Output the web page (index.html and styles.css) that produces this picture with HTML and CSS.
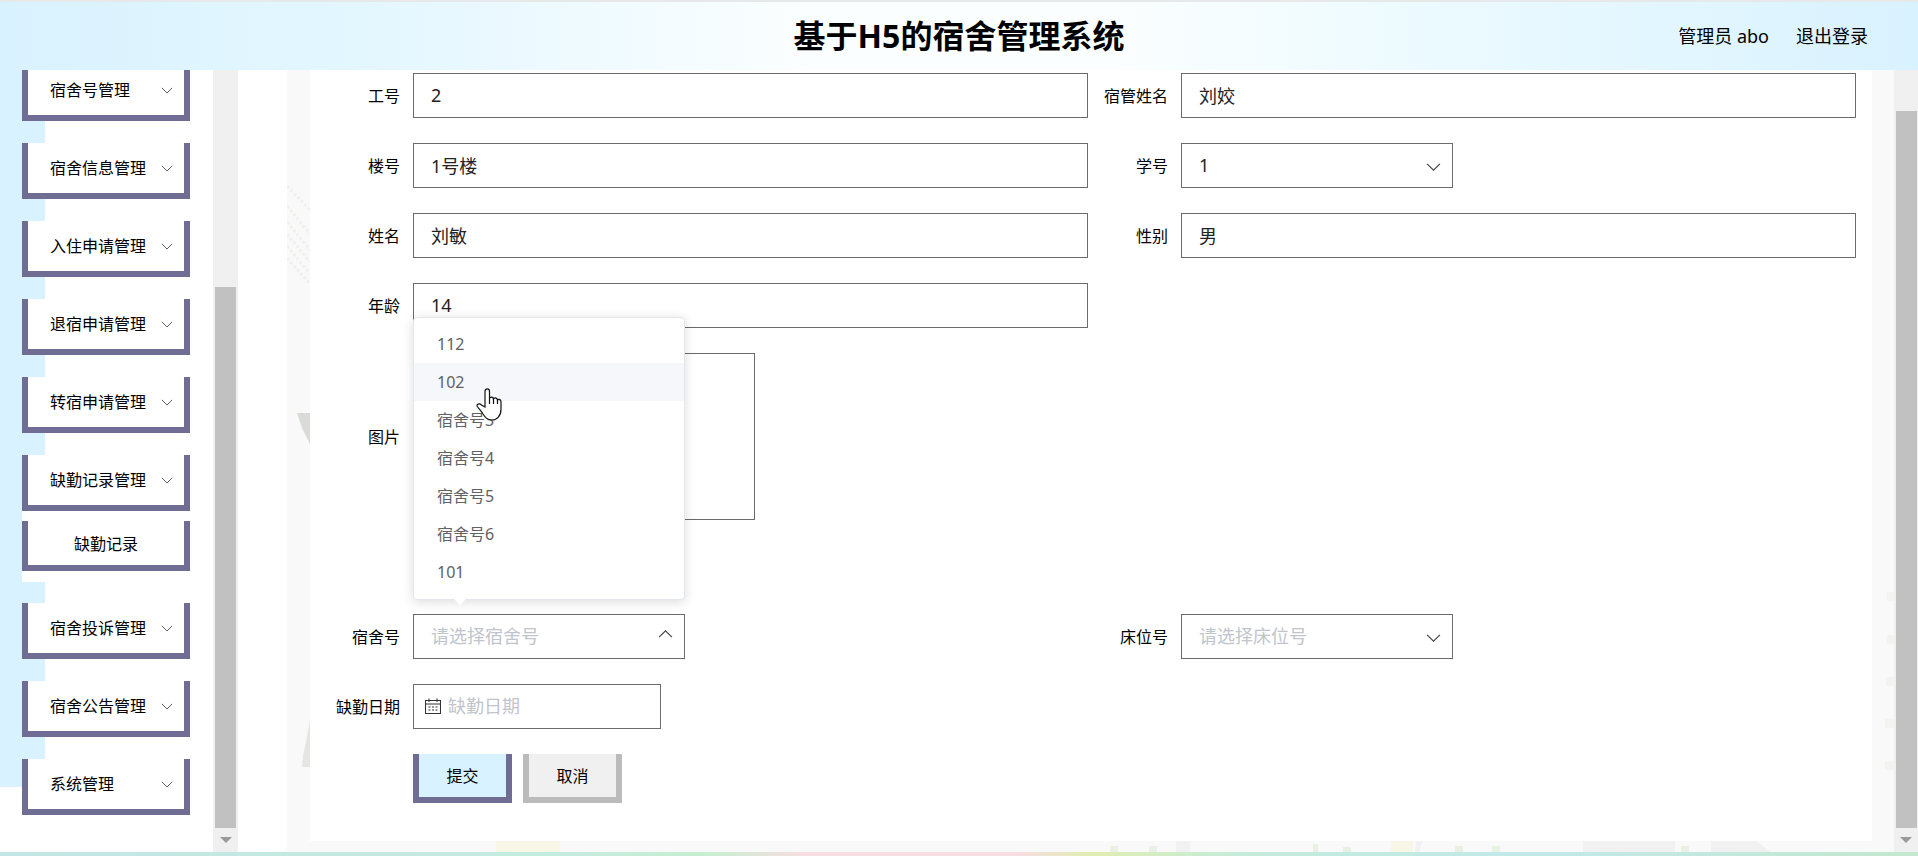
FILE: index.html
```
<!DOCTYPE html>
<html lang="zh-CN">

<head>
    <meta charset="utf-8">
    <title>基于H5的宿舍管理系统</title>
    <link rel="stylesheet" href="styles.css">
</head>

<body>
    <svg class="symbols" aria-hidden="true">
        <symbol id="arrow" viewBox="0 0 14 14">
            <path d="M1 4.5 L7 10.5 L13 4.5" fill="none" stroke="currentColor" stroke-width="1.1" />
        </symbol>
    </svg>

    <header class="header">
        <h1>基于H5的宿舍管理系统</h1>
        <div class="header-user">
            <span>管理员 abo</span>
            <a href="#">退出登录</a>
        </div>
    </header>

    <div class="layout">
        <aside class="sidebar">
            <nav class="menu">
                <a class="menu-item" href="#">宿舍号管理<svg class="menu-arrow"><use href="#arrow" /></svg></a>
                <a class="menu-item" href="#">宿舍信息管理<svg class="menu-arrow"><use href="#arrow" /></svg></a>
                <a class="menu-item" href="#">入住申请管理<svg class="menu-arrow"><use href="#arrow" /></svg></a>
                <a class="menu-item" href="#">退宿申请管理<svg class="menu-arrow"><use href="#arrow" /></svg></a>
                <a class="menu-item" href="#">转宿申请管理<svg class="menu-arrow"><use href="#arrow" /></svg></a>
                <a class="menu-item open" href="#">缺勤记录管理<svg class="menu-arrow"><use href="#arrow" /></svg></a>
                <div class="submenu">
                    <a class="submenu-item" href="#">缺勤记录</a>
                </div>
                <a class="menu-item" href="#">宿舍投诉管理<svg class="menu-arrow"><use href="#arrow" /></svg></a>
                <a class="menu-item" href="#">宿舍公告管理<svg class="menu-arrow"><use href="#arrow" /></svg></a>
                <a class="menu-item" href="#">系统管理<svg class="menu-arrow"><use href="#arrow" /></svg></a>
            </nav>
        </aside>
        <div class="scrollbar scrollbar-menu">
            <div class="scrollbar-thumb"></div>
            <div class="scrollbar-down"></div>
        </div>

        <main class="main">
            <svg class="scene-left" viewBox="0 0 23 782" aria-hidden="true">
                <g stroke="#eff1ee" stroke-width="3" stroke-dasharray="3 2">
                    <path d="M0 116 L23 140 M0 136 L23 164 M0 152 L23 180 M0 164 L23 192 M0 176 L23 204 M0 188 L23 214" />
                </g>
                <path d="M10 343 H23 V374 L19 366 L15 358 Z" fill="#d8dbd7" />
                <path d="M23 650 V697 H15 L16 686 L19 672 Z" fill="#e3e6e2" />
            </svg>
            <svg class="scene-right" viewBox="0 0 22 300" aria-hidden="true">
                <path d="M15 40h7v9h-7z M15 83h7v9h-7z M14 125h8v9h-8z M13 167h9v9h-9z M13 209h9v9h-9z" fill="#f3f3f1" />
            </svg>
            <svg class="scene-bottom" viewBox="0 0 1607 11" preserveAspectRatio="none" aria-hidden="true">
                <path d="M209 0h64v11h-64z M1104 0h22v11h-22z" fill="#f8f6e6" />
                <path d="M889 0h14v11h-14z M1129 0h7l-4 11h-4z M1296 0h92v11h-92z M1424 0h45l15 11h-60z" fill="#f1f1f1" />
                <path d="M823 5h8v6h-8z M862 5h8v6h-8z M1026 3h5v8h-5z M1056 6h8v5h-8z M1168 5h8v6h-8z M1205 5h8v6h-8z M1394 5h8v6h-8z" fill="#e9f0e4" />
            </svg>

            <form class="form">
                <div class="field">
                    <label for="gonghao">工号</label>
                    <input id="gonghao" class="control" type="text" value="2">
                </div>
                <div class="field">
                    <label for="suguan">宿管姓名</label>
                    <input id="suguan" class="control" type="text" value="刘姣">
                </div>
                <div class="field">
                    <label for="louhao">楼号</label>
                    <input id="louhao" class="control" type="text" value="1号楼">
                </div>
                <div class="field">
                    <label for="xuehao">学号</label>
                    <div class="select">
                        <select id="xuehao" class="control">
                            <option>1</option>
                        </select>
                        <svg class="select-arrow"><use href="#arrow" /></svg>
                    </div>
                </div>
                <div class="field">
                    <label for="xingming">姓名</label>
                    <input id="xingming" class="control" type="text" value="刘敏">
                </div>
                <div class="field">
                    <label for="xingbie">性别</label>
                    <input id="xingbie" class="control" type="text" value="男">
                </div>
                <div class="field field-wide">
                    <label for="nianling">年龄</label>
                    <input id="nianling" class="control" type="text" value="14">
                </div>
                <div class="field field-wide field-image">
                    <label for="tupian">图片</label>
                    <button id="tupian" class="upload" type="button" aria-label="图片"></button>
                </div>
                <div class="field">
                    <label for="sushehao">宿舍号</label>
                    <div class="select">
                        <select id="sushehao" class="control empty">
                            <option>请选择宿舍号</option>
                        </select>
                        <svg class="select-arrow up"><use href="#arrow" /></svg>
                        <div class="dropdown">
                            <ul>
                                <li>112</li>
                                <li class="hover">102</li>
                                <li>宿舍号3</li>
                                <li>宿舍号4</li>
                                <li>宿舍号5</li>
                                <li>宿舍号6</li>
                                <li>101</li>
                            </ul>
                            <svg class="cursor" viewBox="0 0 26 34" aria-hidden="true">
                                <path d="M9 19 V3.500 C9 0 13.500 0 13.500 3.500 V11 C13.500 8.500 17.500 8.500 17.500 11.500 C17.500 9 21.500 9.500 21.500 12.500 C21.500 10.500 25 11 25 14 V21 C25 28 21 32 16 32 C11 32 9 29 7 26 C5.500 23 3 21 1.300 18.500 C0 16 3.500 15 5.500 17 Z" fill="#fff" stroke="#111" stroke-width="1.200" />
                                <path d="M13.500 10.500 V16 M17.500 11 V16 M21.500 12 V16" fill="none" stroke="#111" stroke-width="1.200" />
                            </svg>
                        </div>
                    </div>
                </div>
                <div class="field">
                    <label for="chuangwei">床位号</label>
                    <div class="select">
                        <select id="chuangwei" class="control empty">
                            <option>请选择床位号</option>
                        </select>
                        <svg class="select-arrow"><use href="#arrow" /></svg>
                    </div>
                </div>
                <div class="field field-wide">
                    <label for="riqi">缺勤日期</label>
                    <div class="date">
                        <svg class="date-icon" viewBox="0 0 16 16" aria-hidden="true">
                            <path d="M.5 2.500 H15.500 V15.500 H.5 Z M.5 6 H15.500 M4 .5 V4 M12 .5 V4 M3.500 9 H5.500 M7 9 H9 M10.500 9 H12.500 M3.500 12 H5.500 M7 12 H9 M10.500 12 H12.500" fill="none" stroke="#333" stroke-width="1.100" />
                        </svg>
                        <input id="riqi" class="control" type="text" placeholder="缺勤日期">
                    </div>
                </div>
                <div class="buttons">
                    <button class="button submit" type="button">提交</button>
                    <button class="button cancel" type="button">取消</button>
                </div>
            </form>
        </main>
        <div class="scrollbar scrollbar-page">
            <div class="scrollbar-thumb"></div>
            <div class="scrollbar-down"></div>
        </div>
    </div>
    <div class="rainbow"></div>
</body>

</html>
```
FILE: styles.css
```
:root {
    --primary-color: #706d94;
    --light-color: #d9f2ff;
    --border-color: #6b6b6f;
    --placeholder-color: #c0c4cc;
}

* {
    box-sizing: border-box;
}

body {
    margin: 0;
    min-height: 100vh;
    display: flex;
    flex-direction: column;
    background-color: #fff;
    color: #000;
    font-family: "Noto Sans", "Noto Sans CJK SC", sans-serif;
    font-size: 16px;
    line-height: 24px;
}

a {
    color: inherit;
    text-decoration: none;
}

.symbols {
    position: absolute;
    width: 0;
    height: 0;
}

/* header */

.header {
    position: relative;
    z-index: 2;
    height: 70px;
    padding: 0 50px;
    display: grid;
    grid-template-columns: 1fr auto 1fr;
    align-items: center;
    border-top: 2px solid #e6e8ea;
    background: linear-gradient(90deg, var(--light-color), #e4f7ff 20%, #fbfeff 42%, #fbfeff 58%, #ebfaff 75%, #e0f5ff 90%, var(--light-color));
}

.header h1 {
    grid-column: 2;
    margin: 0;
    font-size: 32px;
    font-weight: 700;
    line-height: 48px;
}

.header-user {
    display: flex;
    justify-content: flex-end;
    gap: 27px;
    font-size: 18px;
}

.layout {
    flex: 1;
    display: flex;
}

/* side menu */

.sidebar {
    width: 213px;
    overflow: hidden;
    padding: 0 23px 0 22px;
    background: linear-gradient(var(--light-color), var(--light-color)) no-repeat 0 0 / 45px calc(100% - 65px);
}

.menu {
    margin-top: -5px;
}

.menu-item,
.submenu-item {
    display: flex;
    align-items: center;
    border: 6px solid var(--primary-color);
    border-top: 0;
    background-color: #fff;
}

.menu-item {
    height: 56px;
    margin-bottom: 22px;
    padding: 0 11px 0 22px;
    justify-content: space-between;
}

.menu-item.open {
    margin-bottom: 0;
}

.menu-arrow {
    width: 12px;
    height: 12px;
    color: #555;
}

.submenu {
    padding: 10px 0 11px;
    margin-bottom: 21px;
    background-color: #fff;
}

.submenu-item {
    height: 50px;
    padding-top: 2px;
    justify-content: center;
}

/* scrollbars */

.scrollbar {
    display: flex;
    flex-direction: column;
    align-items: center;
    background-color: #f0f0f0;
}

.scrollbar-menu {
    width: 25px;
    padding-top: 217px;
}

.scrollbar-page {
    width: 24px;
    padding-top: 41px;
}

.scrollbar-thumb {
    flex: 1;
    width: 21px;
    background-color: #c1c1c1;
}

.scrollbar-down {
    height: 24px;
    padding-top: 9px;
}

.scrollbar-down::before {
    content: '';
    display: block;
    border: 6px solid transparent;
    border-top-color: #9a9a9a;
}

/* page */

.main {
    position: relative;
    flex: 1;
    margin-left: 49px;
    padding: 0 22px 11px 23px;
    background-color: #f9f9f9;
}

.scene-left,
.scene-right,
.scene-bottom {
    position: absolute;
}

.scene-left {
    top: 0;
    left: 0;
    width: 23px;
    height: 782px;
}

.scene-right {
    right: 0;
    bottom: 0;
    width: 22px;
    height: 300px;
}

.scene-bottom {
    left: 0;
    bottom: 0;
    width: 100%;
    height: 11px;
}

.form {
    position: relative;
    display: grid;
    grid-template-columns: 1fr 1fr;
    row-gap: 25px;
    min-height: 100%;
    padding: 3px 16px 38px 10px;
    align-content: start;
    background-color: #fff;
}

.field {
    display: flex;
    align-items: center;
}

.field label {
    width: 93px;
    padding-right: 13px;
    text-align: right;
    white-space: nowrap;
}

.field-wide {
    grid-column: 1 / 3;
}

.control {
    flex: 1;
    min-width: 0;
    height: 45px;
    padding: 0 17px 2px;
    border: 1px solid var(--border-color);
    border-radius: 0;
    outline: 0;
    appearance: none;
    background-color: #fff;
    color: #222;
    font: inherit;
    font-size: 18px;
}

.control::placeholder {
    color: var(--placeholder-color);
    opacity: 1;
}

.control.empty {
    color: var(--placeholder-color);
}

.field-wide > .control {
    flex: none;
    width: calc(50% - 93px);
}

.field-image {
    margin-bottom: 69px;
}

.upload {
    width: 342px;
    height: 167px;
    border: 1px solid var(--border-color);
    background-color: #fff;
}

.select {
    position: relative;
    display: flex;
    width: 272px;
}

.select-arrow {
    position: absolute;
    top: 16px;
    right: 12px;
    width: 15px;
    height: 15px;
    color: #444;
    pointer-events: none;
}

.select-arrow.up {
    transform: rotate(180deg);
    top: 13px;
}

.date {
    position: relative;
    display: flex;
    width: 248px;
}

.date .control {
    padding-left: 34px;
}

.date-icon {
    position: absolute;
    top: 14px;
    left: 12px;
    width: 16px;
    height: 16px;
}

/* options list */

.dropdown {
    position: absolute;
    left: 0;
    bottom: 59px;
    width: 100%;
    border: 1px solid #e4e7ed;
    border-radius: 4px;
    background-color: #fff;
    box-shadow: 0 2px 12px 0 rgba(0, 0, 0, 0.14);
}

.dropdown::after {
    content: '';
    position: absolute;
    left: 40px;
    bottom: -12px;
    border: 6px solid transparent;
    border-top-color: #fff;
}

.dropdown ul {
    margin: 0;
    padding: 7px 0 8px;
    list-style: none;
}

.dropdown li {
    height: 38px;
    padding-left: 23px;
    color: #606266;
    line-height: 38px;
}

.dropdown .hover {
    background-color: #f5f7fa;
}

.cursor {
    position: absolute;
    top: 70px;
    left: 62px;
    width: 26px;
    height: 34px;
}

/* buttons */

.buttons {
    grid-column: 1 / 3;
    display: flex;
    gap: 11px;
    padding-left: 93px;
}

.button {
    width: 99px;
    height: 49px;
    padding: 0;
    border: 6px solid;
    border-top: 0;
    color: #000;
    font: inherit;
}

.submit {
    border-color: var(--primary-color);
    background-color: var(--light-color);
}

.cancel {
    border-color: #bbb;
    background-color: #f0f0f0;
}

.rainbow {
    height: 4px;
    background: linear-gradient(90deg, #c3e6e6, #c3ecdf 30%, #c8efd0 37%, #f8dde2 42%, #f8dde2 53%, #e0eeb0 57%, #c3ecdc 65%, #c1e9e9 80%, #c3e8cf);
}
```
